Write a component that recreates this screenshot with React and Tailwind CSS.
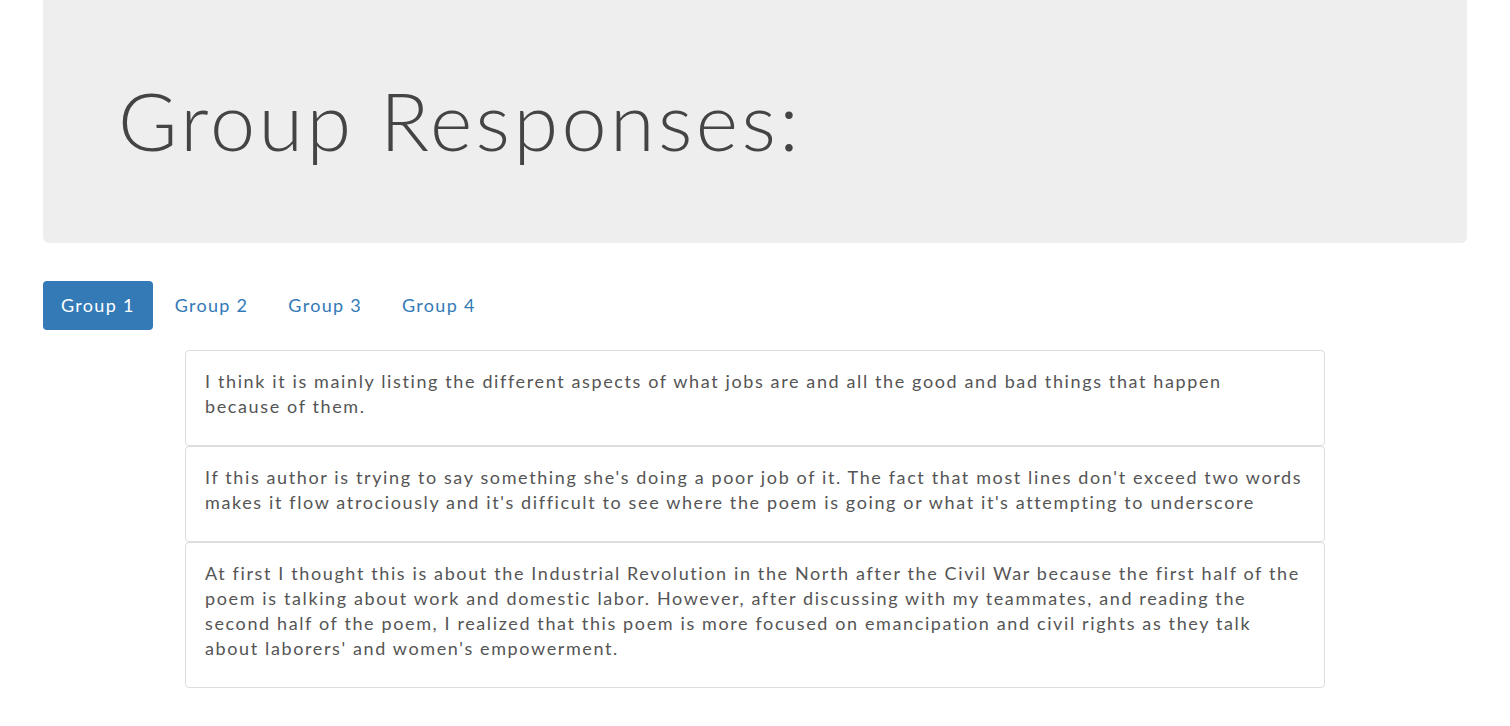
import React, { useState } from 'react';

const groups = ['Group 1', 'Group 2', 'Group 3', 'Group 4'];

// each response kept as its printed lines
const responses = [
    [
        "I think it is mainly listing the different aspects of what jobs are and all the good and bad things that happen",
        "because of them.",
    ],
    [
        "If this author is trying to say something she's doing a poor job of it. The fact that most lines don't exceed two words",
        "makes it flow atrociously and it's difficult to see where the poem is going or what it's attempting to underscore",
    ],
    [
        "At first I thought this is about the Industrial Revolution in the North after the Civil War because the first half of the",
        "poem is talking about work and domestic labor. However, after discussing with my teammates, and reading the",
        "second half of the poem, I realized that this poem is more focused on emancipation and civil rights as they talk",
        "about laborers' and women's empowerment.",
    ],
];

const App = () => {
    const [active, setActive] = useState(0);

    return (
        <div className="min-h-screen bg-white px-[43px] text-[#555] font-['Lato','Noto_Sans',sans-serif]">
            {/* Jumbotron */}
            <div className="bg-[#eeeeee] rounded-b-[6px] h-[243px] flex items-center pl-[75px]">
                <h1 className="text-[81px] font-light leading-none text-[#444] pb-[4px] tracking-[3.4px]">Group Responses:</h1>
            </div>

            {/* Pills */}
            <div className="flex mt-[38px] gap-[4px]">
                {groups.map((g, i) => (
                    <button
                        key={g}
                        onClick={() => setActive(i)}
                        className={
                            i === active
                                ? 'h-[49px] px-[18px] rounded-[4px] bg-[#337ab7] text-white text-[18px] tracking-[1.3px]'
                                : 'h-[49px] px-[18px] rounded-[4px] text-[#337ab7] text-[18px] tracking-[1.3px]'
                        }
                    >
                        {g}
                    </button>
                ))}
            </div>

            {/* Responses */}
            <div className="w-[1140px] mx-auto mt-[20px] flex flex-col">
                {responses.map((lines, i) => (
                    <div key={i} className="border border-[#dddddd] rounded-[4px] pt-[18px] pb-[26px] px-[19px] bg-white">
                        <p className="text-[18px] leading-[25px] tracking-[1.62px] text-[#555]">
                            {lines.map((l, j) => (
                                <span key={j} className="block">{l}</span>
                            ))}
                        </p>
                    </div>
                ))}
            </div>
        </div>
    );
};

export default App;
